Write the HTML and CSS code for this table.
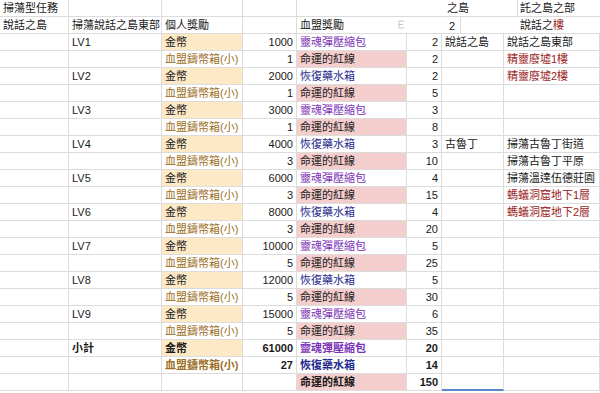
FILE: index.html
```html
<!DOCTYPE html>
<html>
<head>
    <title>掃蕩型任務</title>
    <link rel="stylesheet" href="styles.css">
</head>
<body>
    <div class="page">
        <div class="sheet">
            <!-- 1 -->
            <div class="c">掃蕩型任務</div><div class="c"></div><div class="c"></div><div class="c"></div>
            <div class="c"></div><div class="c"></div><div class="c"></div><div class="c"></div>
            <!-- 2 -->
            <div class="c">說話之島</div><div class="c">掃蕩說話之島東部</div><div class="c">個人獎勵</div><div class="c"></div>
            <div class="c">血盟獎勵</div><div class="c"></div><div class="c"></div><div class="c"></div>
            <!-- LV1 -->
            <div class="c"></div><div class="c">LV1</div><div class="c gold">金幣</div><div class="c num">1000</div>
            <div class="c soul">靈魂彈壓縮包</div><div class="c num">2</div><div class="c">說話之島</div><div class="c">說話之島東部</div>
            <div class="c"></div><div class="c"></div><div class="c coin">血盟鑄幣箱(小)</div><div class="c num">1</div>
            <div class="c pink">命運的紅線</div><div class="c num">2</div><div class="c"></div><div class="c red">精靈廢墟1樓</div>
            <!-- LV2 -->
            <div class="c"></div><div class="c">LV2</div><div class="c gold">金幣</div><div class="c num">2000</div>
            <div class="c potion">恢復藥水箱</div><div class="c num">2</div><div class="c"></div><div class="c red">精靈廢墟2樓</div>
            <div class="c"></div><div class="c"></div><div class="c coin">血盟鑄幣箱(小)</div><div class="c num">1</div>
            <div class="c pink">命運的紅線</div><div class="c num">5</div><div class="c"></div><div class="c"></div>
            <!-- LV3 -->
            <div class="c"></div><div class="c">LV3</div><div class="c gold">金幣</div><div class="c num">3000</div>
            <div class="c soul">靈魂彈壓縮包</div><div class="c num">3</div><div class="c"></div><div class="c"></div>
            <div class="c"></div><div class="c"></div><div class="c coin">血盟鑄幣箱(小)</div><div class="c num">1</div>
            <div class="c pink">命運的紅線</div><div class="c num">8</div><div class="c"></div><div class="c"></div>
            <!-- LV4 -->
            <div class="c"></div><div class="c">LV4</div><div class="c gold">金幣</div><div class="c num">4000</div>
            <div class="c potion">恢復藥水箱</div><div class="c num">3</div><div class="c">古魯丁</div><div class="c">掃蕩古魯丁街道</div>
            <div class="c"></div><div class="c"></div><div class="c coin">血盟鑄幣箱(小)</div><div class="c num">3</div>
            <div class="c pink">命運的紅線</div><div class="c num">10</div><div class="c"></div><div class="c">掃蕩古魯丁平原</div>
            <!-- LV5 -->
            <div class="c"></div><div class="c">LV5</div><div class="c gold">金幣</div><div class="c num">6000</div>
            <div class="c soul">靈魂彈壓縮包</div><div class="c num">4</div><div class="c"></div><div class="c">掃蕩溫達伍德莊園</div>
            <div class="c"></div><div class="c"></div><div class="c coin">血盟鑄幣箱(小)</div><div class="c num">3</div>
            <div class="c pink">命運的紅線</div><div class="c num">15</div><div class="c"></div><div class="c red">螞蟻洞窟地下1層</div>
            <!-- LV6 -->
            <div class="c"></div><div class="c">LV6</div><div class="c gold">金幣</div><div class="c num">8000</div>
            <div class="c potion">恢復藥水箱</div><div class="c num">4</div><div class="c"></div><div class="c red">螞蟻洞窟地下2層</div>
            <div class="c"></div><div class="c"></div><div class="c coin">血盟鑄幣箱(小)</div><div class="c num">3</div>
            <div class="c pink">命運的紅線</div><div class="c num">20</div><div class="c"></div><div class="c"></div>
            <!-- LV7 -->
            <div class="c"></div><div class="c">LV7</div><div class="c gold">金幣</div><div class="c num">10000</div>
            <div class="c soul">靈魂彈壓縮包</div><div class="c num">5</div><div class="c"></div><div class="c"></div>
            <div class="c"></div><div class="c"></div><div class="c coin">血盟鑄幣箱(小)</div><div class="c num">5</div>
            <div class="c pink">命運的紅線</div><div class="c num">25</div><div class="c"></div><div class="c"></div>
            <!-- LV8 -->
            <div class="c"></div><div class="c">LV8</div><div class="c gold">金幣</div><div class="c num">12000</div>
            <div class="c potion">恢復藥水箱</div><div class="c num">5</div><div class="c"></div><div class="c"></div>
            <div class="c"></div><div class="c"></div><div class="c coin">血盟鑄幣箱(小)</div><div class="c num">5</div>
            <div class="c pink">命運的紅線</div><div class="c num">30</div><div class="c"></div><div class="c"></div>
            <!-- LV9 -->
            <div class="c"></div><div class="c">LV9</div><div class="c gold">金幣</div><div class="c num">15000</div>
            <div class="c soul">靈魂彈壓縮包</div><div class="c num">6</div><div class="c"></div><div class="c"></div>
            <div class="c"></div><div class="c"></div><div class="c coin">血盟鑄幣箱(小)</div><div class="c num">5</div>
            <div class="c pink">命運的紅線</div><div class="c num">35</div><div class="c"></div><div class="c"></div>
            <!-- 小計 -->
            <div class="c"></div><div class="c b">小計</div><div class="c gold b">金幣</div><div class="c num b">61000</div>
            <div class="c soul b">靈魂彈壓縮包</div><div class="c num b">20</div><div class="c"></div><div class="c"></div>
            <div class="c"></div><div class="c"></div><div class="c coin b">血盟鑄幣箱(小)</div><div class="c num b">27</div>
            <div class="c potion b">恢復藥水箱</div><div class="c num b">14</div><div class="c"></div><div class="c"></div>
            <div class="c"></div><div class="c"></div><div class="c"></div><div class="c"></div>
            <div class="c pink b">命運的紅線</div><div class="c num b">150</div><div class="c sel"></div><div class="c"></div>
        </div>

        <!-- pasted snippet lying over the top right corner -->
        <div class="paste">
            <div class="paste-row">
                <div class="p1 line">之島</div>
                <div class="p3">託之島之部</div>
            </div>
            <div class="paste-row">
                <div class="p2 line">
                    <svg class="paste-icon" width="8" height="9" viewBox="0 0 8 9">
                        <path d="M1 1h5M1 1v7h5M1 4.5h4" stroke="#b9cbd6" stroke-width="1" fill="none"/>
                    </svg>
                    <span>2</span>
                </div>
                <div class="p2b"></div>
                <div class="p3">說話之<span class="red">樓</span></div>
            </div>
        </div>
    </div>
</body>
</html>
```

FILE: styles.css
```css
* {
    margin: 0;
    padding: 0;
    box-sizing: border-box;
}

body {
    background: #fff;
    font-family: 'Liberation Sans', 'Noto Sans CJK TC', sans-serif;
    font-size: 11px;
    color: #1a1a1a;
}

.page {
    position: relative;
    width: 600px;
    height: 393px;
    overflow: hidden;
}

.sheet {
    display: grid;
    grid-template-columns: 69px 93px 81px 54px 110px 35px 62px 96px;
    grid-auto-rows: 17px;
}

.c {
    border-right: 1px solid #dcdcdc;
    border-bottom: 1px solid #dcdcdc;
    line-height: 16px;
    padding: 0 3px;
    white-space: nowrap;
    overflow: hidden;
}

.num {
    text-align: right;
}

.b {
    font-weight: bold;
}

.gold {
    background: #fde9c6;
}

.pink {
    background: #f4cdcd;
}

.coin {
    color: #9d6f25;
}

.soul {
    color: #7a32b6;
}

.potion {
    color: #1f2c8e;
}

.red {
    color: #9a1c1c;
}

.sel {
    border-bottom: 2px solid #5b86c9;
}

.paste {
    position: absolute;
    top: 0;
    left: 397px;
    width: 203px;
    height: 34px;
    background: #fff;
    border-bottom: 1px solid #dcdcdc;
}

.paste-row {
    display: flex;
    height: 17px;
    line-height: 16px;
    white-space: nowrap;
}

.paste-row:first-child {
    border-bottom: 1px solid #dcdcdc;
}

.p1 {
    width: 121px;
    padding-left: 50px;
}

.p2 {
    width: 64px;
    display: flex;
    align-items: center;
    justify-content: space-between;
    padding: 0 5px 0 1px;
}

.p2b {
    width: 57px;
}

.line {
    border-right: 1px solid #dcdcdc;
}

.p3 {
    padding-left: 2px;
}

.paste-icon {
    margin-top: -2px;
}
```
